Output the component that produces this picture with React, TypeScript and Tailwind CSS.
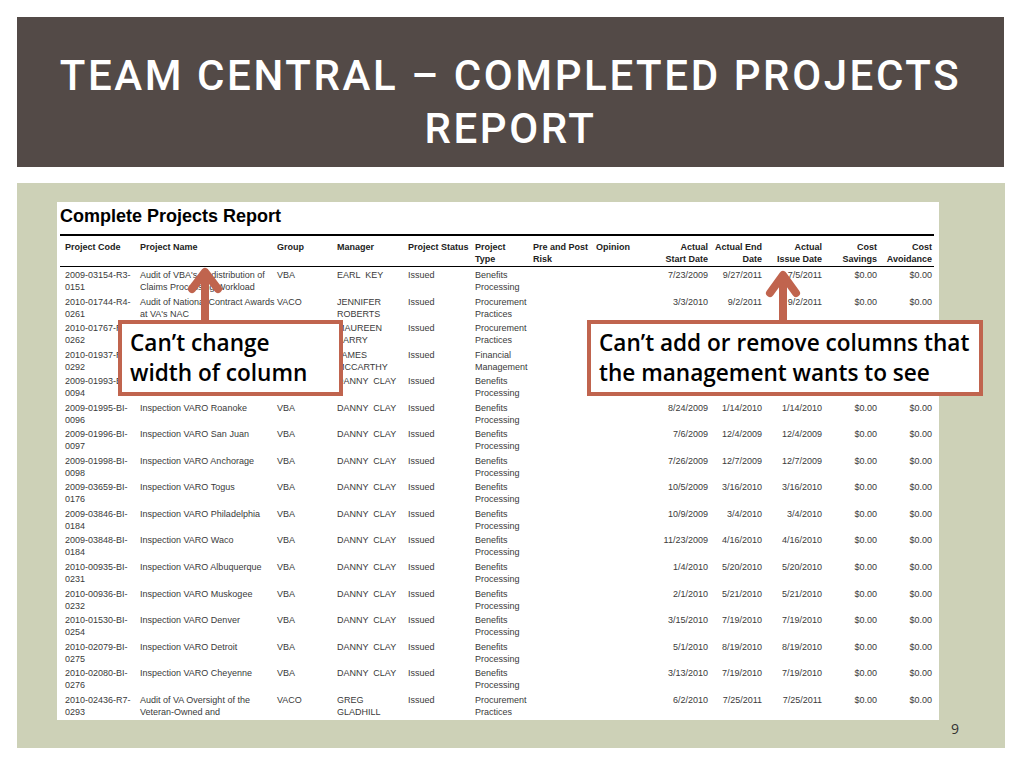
import React from "react";

type Row = {
  code: [string, string];
  name: string[];
  group: string;
  manager: string[];
  type: string[];
  start: string;
  end: string;
  issue: string;
};

const rows: Row[] = [
  { code: ["2009-03154-R3-", "0151"], name: ["Audit of VBA's Redistribution of", "Claims Processing Workload"], group: "VBA", manager: ["EARL  KEY"], type: ["Benefits", "Processing"], start: "7/23/2009", end: "9/27/2011", issue: "7/5/2011" },
  { code: ["2010-01744-R4-", "0261"], name: ["Audit of National Contract Awards", "at VA's NAC"], group: "VACO", manager: ["JENNIFER", "ROBERTS"], type: ["Procurement", "Practices"], start: "3/3/2010", end: "9/2/2011", issue: "9/2/2011" },
  { code: ["2010-01767-R4-", "0262"], name: ["Audit of Contract Awards", "at VA's NAC"], group: "VACO", manager: ["MAUREEN", "BARRY"], type: ["Procurement", "Practices"], start: "3/8/2010", end: "9/2/2011", issue: "9/2/2011" },
  { code: ["2010-01937-R6-", "0292"], name: ["Audit of VA's Financial", "Management"], group: "VACO", manager: ["JAMES", "MCCARTHY"], type: ["Financial", "Management"], start: "4/1/2010", end: "8/3/2011", issue: "8/3/2011" },
  { code: ["2009-01993-BI-", "0094"], name: ["Inspection VARO Boise"], group: "VBA", manager: ["DANNY  CLAY"], type: ["Benefits", "Processing"], start: "8/17/2009", end: "1/7/2010", issue: "1/7/2010" },
  { code: ["2009-01995-BI-", "0096"], name: ["Inspection VARO Roanoke"], group: "VBA", manager: ["DANNY  CLAY"], type: ["Benefits", "Processing"], start: "8/24/2009", end: "1/14/2010", issue: "1/14/2010" },
  { code: ["2009-01996-BI-", "0097"], name: ["Inspection VARO San Juan"], group: "VBA", manager: ["DANNY  CLAY"], type: ["Benefits", "Processing"], start: "7/6/2009", end: "12/4/2009", issue: "12/4/2009" },
  { code: ["2009-01998-BI-", "0098"], name: ["Inspection VARO Anchorage"], group: "VBA", manager: ["DANNY  CLAY"], type: ["Benefits", "Processing"], start: "7/26/2009", end: "12/7/2009", issue: "12/7/2009" },
  { code: ["2009-03659-BI-", "0176"], name: ["Inspection VARO Togus"], group: "VBA", manager: ["DANNY  CLAY"], type: ["Benefits", "Processing"], start: "10/5/2009", end: "3/16/2010", issue: "3/16/2010" },
  { code: ["2009-03846-BI-", "0184"], name: ["Inspection VARO Philadelphia"], group: "VBA", manager: ["DANNY  CLAY"], type: ["Benefits", "Processing"], start: "10/9/2009", end: "3/4/2010", issue: "3/4/2010" },
  { code: ["2009-03848-BI-", "0184"], name: ["Inspection VARO Waco"], group: "VBA", manager: ["DANNY  CLAY"], type: ["Benefits", "Processing"], start: "11/23/2009", end: "4/16/2010", issue: "4/16/2010" },
  { code: ["2010-00935-BI-", "0231"], name: ["Inspection VARO Albuquerque"], group: "VBA", manager: ["DANNY  CLAY"], type: ["Benefits", "Processing"], start: "1/4/2010", end: "5/20/2010", issue: "5/20/2010" },
  { code: ["2010-00936-BI-", "0232"], name: ["Inspection VARO Muskogee"], group: "VBA", manager: ["DANNY  CLAY"], type: ["Benefits", "Processing"], start: "2/1/2010", end: "5/21/2010", issue: "5/21/2010" },
  { code: ["2010-01530-BI-", "0254"], name: ["Inspection VARO Denver"], group: "VBA", manager: ["DANNY  CLAY"], type: ["Benefits", "Processing"], start: "3/15/2010", end: "7/19/2010", issue: "7/19/2010" },
  { code: ["2010-02079-BI-", "0275"], name: ["Inspection VARO Detroit"], group: "VBA", manager: ["DANNY  CLAY"], type: ["Benefits", "Processing"], start: "5/1/2010", end: "8/19/2010", issue: "8/19/2010" },
  { code: ["2010-02080-BI-", "0276"], name: ["Inspection VARO Cheyenne"], group: "VBA", manager: ["DANNY  CLAY"], type: ["Benefits", "Processing"], start: "3/13/2010", end: "7/19/2010", issue: "7/19/2010" },
  { code: ["2010-02436-R7-", "0293"], name: ["Audit of VA Oversight of the", "Veteran-Owned and"], group: "VACO", manager: ["GREG", "GLADHILL"], type: ["Procurement", "Practices"], start: "6/2/2010", end: "7/25/2011", issue: "7/25/2011" },
];

const gridCols = "grid grid-cols-[75px_137px_60px_71px_67px_58px_63px_54px_58px_54px_60px_55px_55px]";

function Lines({ lines, right }: { lines: string[]; right?: boolean }) {
  return (
    <div className={`whitespace-pre ${right ? "text-right" : ""}`}>
      {lines.map((l, i) => (
        <div key={i}>{l}</div>
      ))}
    </div>
  );
}

export default function App() {
  return (
    <div className="w-[1024px] h-[768px] bg-white overflow-hidden" style={{ fontFamily: '"Liberation Sans", Arial, sans-serif' }}>
      <div className="pt-[17px] pl-[17px]">
        <div
          className="w-[987px] h-[150px] bg-[#534a47] flex flex-col items-center justify-center text-white text-[42px] leading-[53px] tracking-[2.6px] uppercase font-medium pt-[20px]"
          style={{ fontFamily: 'Roboto, "Liberation Sans", sans-serif' }}
        >
          <div>Team Central – Completed Projects</div>
          <div>Report</div>
        </div>
      </div>

      <div className="relative ml-[17px] mt-[16px] w-[988px] h-[565px] bg-[#cdd1b7] pl-[40px] pt-[19px]">
        <div className="w-[882px] h-[518px] bg-white pt-[3px] text-[9px] leading-[12px] text-[#3a3a3a] overflow-hidden">
          <div className="ml-[3px] text-[18px] leading-[22px] font-bold text-black">Complete Projects Report</div>
          <div className="ml-[3px] mt-[7px] w-[874px] h-[2px] bg-black" />
          <div className={`${gridCols} ml-[8px] pt-[5px] font-bold text-[#222]`}>
            <Lines lines={["Project Code"]} />
            <Lines lines={["Project Name"]} />
            <Lines lines={["Group"]} />
            <Lines lines={["Manager"]} />
            <Lines lines={["Project Status"]} />
            <Lines lines={["Project", "Type"]} />
            <Lines lines={["Pre and Post", "Risk"]} />
            <Lines lines={["Opinion"]} />
            <Lines lines={["Actual", "Start Date"]} right />
            <Lines lines={["Actual End", "Date"]} right />
            <Lines lines={["Actual", "Issue Date"]} right />
            <Lines lines={["Cost", "Savings"]} right />
            <Lines lines={["Cost", "Avoidance"]} right />
          </div>
          <div className="ml-[3px] mt-[1px] w-[874px] h-[1px] bg-black" />
          <div className="ml-[8px] pt-[2px]">
            {rows.map((r, i) => (
              <div key={i} className={`${gridCols} h-[26.56px]`}>
                <Lines lines={r.code} />
                <Lines lines={r.name} />
                <Lines lines={[r.group]} />
                <Lines lines={r.manager} />
                <Lines lines={["Issued"]} />
                <Lines lines={r.type} />
                <div />
                <div />
                <Lines lines={[r.start]} right />
                <Lines lines={[r.end]} right />
                <Lines lines={[r.issue]} right />
                <Lines lines={["$0.00"]} right />
                <Lines lines={["$0.00"]} right />
              </div>
            ))}
          </div>
        </div>
        <div className="flex justify-end pr-[46px] mt-[1px]">
          <span className="text-[14px] leading-[16px] text-[#333]" style={{ fontFamily: '"Open Sans", sans-serif' }}>9</span>
        </div>

        {/* arrows */}
        <svg className="absolute left-0 top-0 pointer-events-none" width="988" height="565" viewBox="0 0 988 565">
          <g stroke="#c0644e" strokeWidth="8" fill="none" strokeLinecap="round" strokeLinejoin="round">
            <line x1="188" y1="92" x2="188" y2="139" strokeLinecap="butt" />
            <polyline points="175,106 188,89 201,106" />
            <line x1="766" y1="94" x2="766" y2="139" strokeLinecap="butt" />
            <polyline points="753,110 766,92 779,110" />
          </g>
        </svg>

        {/* callouts */}
        <div
          className="absolute left-[101px] top-[137px] w-[225px] h-[76px] bg-white border-[4px] border-[#c0644e] flex flex-col justify-center pl-[8px] text-[22.6px] leading-[30px] font-semibold text-black"
          style={{ fontFamily: '"Open Sans", sans-serif' }}
        >
          <div>Can’t change</div>
          <div>width of column</div>
        </div>
        <div
          className="absolute left-[570px] top-[137px] w-[396px] h-[76px] bg-white border-[4px] border-[#c0644e] flex flex-col justify-center pl-[8px] text-[22.6px] leading-[30px] font-semibold text-black whitespace-nowrap"
          style={{ fontFamily: '"Open Sans", sans-serif' }}
        >
          <div>Can’t add or remove columns that</div>
          <div>the management wants to see</div>
        </div>
      </div>
    </div>
  );
}
